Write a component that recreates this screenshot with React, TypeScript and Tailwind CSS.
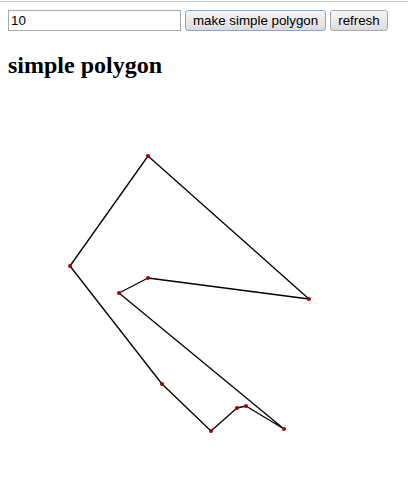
import React from "react";

const pts: [number, number][] = [
  [148, 156],
  [309, 299],
  [148, 278],
  [119, 293],
  [284, 429],
  [246, 406],
  [237, 408],
  [211, 431],
  [162, 384],
  [70, 266],
];

export default function App() {
  const Y0 = 79;
  const rel = pts.map(([x, y]) => [x, y - Y0] as [number, number]);
  const d = rel.map(([x, y], i) => `${i === 0 ? "M" : "L"}${x} ${y}`).join(" ") + " Z";
  return (
    <div className="w-[408px] h-[487px] bg-white overflow-hidden" style={{ fontFamily: '"Liberation Sans", Arial, sans-serif' }}>
      <div className="mt-px h-px bg-[#c6c6c6]" />
      <div className="px-2 pt-2">
        <div className="flex items-center h-[21px]">
          <input
            defaultValue="10"
            className="w-[173px] h-[21px] border border-[#a9a9a9] px-[2px] text-[13.33px] text-black outline-none bg-white"
          />
          <button className="ml-[4px] h-[21px] px-[7px] text-[13.33px] text-black border border-[#7fa8dc] rounded-[3px] bg-gradient-to-b from-[#f7f7f7] to-[#dcdcdc] leading-none">
            make simple polygon
          </button>
          <button className="ml-[4px] h-[21px] px-[7px] text-[13.33px] text-black border border-[#a8a8a8] rounded-[3px] bg-gradient-to-b from-[#f7f7f7] to-[#dcdcdc] leading-none">
            refresh
          </button>
        </div>
        <h2
          className="mt-[20px] h-[28px] text-[24px] leading-[28px] font-bold text-black"
          style={{ fontFamily: '"Liberation Serif", "Times New Roman", serif' }}
        >
          simple polygon
        </h2>
      </div>
      <svg width={408} height={408} className="block">
        <path d={d} fill="none" stroke="#000" strokeWidth={1.3} strokeLinejoin="round" />
        {rel.map(([x, y], i) => (
          <circle key={i} cx={x} cy={y} r={2} fill="#a30000" />
        ))}
      </svg>
    </div>
  );
}
